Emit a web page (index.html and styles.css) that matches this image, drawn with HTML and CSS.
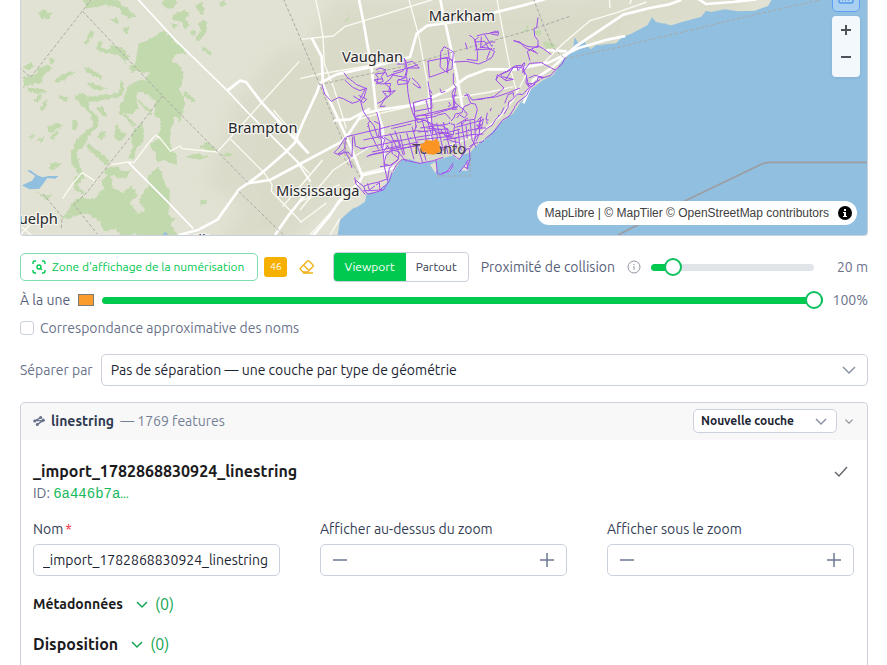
FILE: index.html
```html
<!DOCTYPE html>
<html lang="fr">
<head>
<meta charset="utf-8">
<meta name="viewport" content="width=device-width, initial-scale=1">
<title>Importation de couches</title>
<link rel="stylesheet" href="styles.css">
</head>
<body>
<main class="page">
  <section class="map" aria-label="Carte">
    <svg class="map-canvas" viewBox="60 0 2544 705" preserveAspectRatio="xMidYMid slice" role="img" aria-label="Toronto">
      <defs>
        <filter id="relief" x="-20%" y="-20%" width="140%" height="140%"><feGaussianBlur stdDeviation="22"/></filter>
        <filter id="ragged" x="-5%" y="-5%" width="110%" height="110%">
          <feTurbulence type="fractalNoise" baseFrequency="0.08" numOctaves="3" seed="4"/>
          <feDisplacementMap in="SourceGraphic" scale="14" xChannelSelector="R" yChannelSelector="G"/>
        </filter>
        <filter id="jitter" x="-5%" y="-5%" width="110%" height="110%">
          <feTurbulence type="fractalNoise" baseFrequency="0.12" numOctaves="2" seed="9"/>
          <feDisplacementMap in="SourceGraphic" scale="5" xChannelSelector="R" yChannelSelector="G"/>
        </filter>
      </defs>
      <rect class="land" x="0" y="-100" width="2700" height="900"/>
      <g class="urban" filter="url(#relief)">
        <path d="M700 330l120-170 90-20 90-140h350l500 0 100 60-80 120-420 300-400 60-200 200h-200l90-120-120-70z"/>
        <path d="M1740-10h520l-60 60-180 20-200 60-70 60z"/>
      </g>
      <g class="forest" filter="url(#ragged)">
        <path d="M248 0l12 26 34-8 50-2 40 40 22-6-16-20-42-30z"/>
        <path d="M112 38l18-8 26 10-10 14-22 4z M328 58l22-4 8 18-16-6z M372 78l16 4-6 20-12-10z M252 128l22-34 10-4-12 26-14 18z"/>
        <path d="M288 148l8-26 10 4-4 18 26 4 8-14 34 12 18 26-12 18-18-22-32-10-24 0z"/>
        <path d="M416 132l44-20 26-18 26 12 14 22 26 14 4 18-28 2-12 22 28 18 6 26-10 40 14 30-4 40-28 14-8 32-6 46 20 34 4 30-22-4-20-12-18 10-8-24 14-24-2-38 8-34-20-26 0-42-30-20-28-6-12-22 18-10 24-2 12-22-34-6-18 8-10-18 20-12z"/>
        <path d="M390 252l22 18-4 34 10 18-24 22-22-6-12 10-2-32 12-16 8-26z M352 372l12 26 16 2-16 22-22-8 2-22z"/>
        <path d="M72 232l30-6 16-22 28-10 10 12-26 22-6 22-34 4-18 8z M78 264l40 0 26 10-10 8-50-8z M252 200l24 8 30 20-4 10-44-24z M262 246l36 10 26 12-28 4-30-14z"/>
        <path d="M222 290l26-12 16 12 34-4 60-8 4-40 12 18-10 34-66 12-34 4 4 24 28 20-4 32-28 26-10 30-22 12 4 40 20 46-6 2-34-40-4-30 10-38 30-32 30-24-12-34-24-20z"/>
        <path d="M120 324l16-24 10-2-18 38z M160 242l32-22 40-6-34 22-24 12z M286 330l20-14 8 20 6 12-18-4-2-8z M140 380l34-10 18 8-40 20z M108 420l26-10-12 18z M88 412l14-8-4 18z M148 410l24-18 6 8-22 18z M216 358l16 6-4 30-10-4z"/>
        <path d="M390 404l40-40 2 60-22 22-8 32-18-2 16-38z M448 430l28-14 26 14 14 40-10 14-18-24-30-8z M416 300l40 34-4 8-38-34z M374 340l34 36-6 4-34-32z"/>
        <path d="M290 412l14-22 14 10-10 20z M264 428l64 56-10 14-58-58z M220 540l20-20 8 14-16 24 24 20-4 6-30-16z M70 200l26-14 8 12-22 14z M180 282l24 14-6 10-22-12z M104 300l14-18 8 4-12 22z M150 170l14 12-8 12-8-10z"/>
        <path d="M314 508l34-8 24 14 24-2-22 24-42-10 6 36 28 16 28-18 20 24-26 22 24 34 22-8-18-34 26-38 2-34 16-10 10-16 16 18 4 30 18 20 0 80 16 6-12 22 20 26-16 26-60 10-22-30-40-6-20 14-26-30-36 8-14-32-40-22-38 8-10-34 30-22 44 4 14-20 14-10-4-30 12-10z M220 610l34 4-10 30-60 14z"/>
        <path d="M484 8l26-12 24 10-18 20-22-2z M520 44l30-14 20 10-14 18 18 18-16 10-20-22-22-4z M586 20l16-14 14 18-10 22z M610 56l10 14-4 30-22 24-8-8 18-26-10-16z M570 96l14-10 6 14-14 6z M514 70l20 4-10 14z M658 10l14-10 6 14-14 8z M604 136l16 10 16 12-8 6-20-14z"/>
        <path d="M552 272l36 30-8 4-28-18z M530 322l14 22-4 26-10-20z M554 470l40-10 34 14-36 4z M596 436l30-8 28 22-30 4z M660 462l42-2-20 12z M600 596l22 8-18 14z M150 490l36 0-10 14-26 4z M100 568l30 20 30-6-20 18z"/>
        <path d="M1032 60l20-16-10 14-6 14z M1569 95l16-20 0 14-10 8z M1600 70l4 24 14-4 4 20-22-12z M1630 124l30 6 12 10-34 6z"/>
      </g>
      <path class="water" d="M66 556l30-14 10-14-24-16 8-2 22 16 16 6 18-4 30 0-10 8-24-2-10 14-14 18-30 2z M486 704l10-8 10 8z"/>
      <path class="water" transform="translate(900 0)" filter="url(#jitter)" d="M108 720l5-15 7-45 22-20 18-15 12-4 23-16 5-25 40-5 22-30 28-45 15-20 25-2 30 12 50-8 40-14 35-3 25-7 20-23 30-20 40-45 40-30 20-30 30-40 40-30 30-15 35-55 25-30 4-28 11 18 15-10 10 14 12 14 16-12 14-2 46-4 20-20 24-8 30-16 20-10 14-24 12 14 46 10 40-12 50-14 14-18 16 4 40-8 40 6 50-2 40-14 12-20 340-10v740z"/>
      <path class="island" transform="translate(900 0)" d="M390 494l16-8 6 20-6 14z M424 520l20-8 12-16-8 20z M456 464l28-8 6 6-16 18z M484 512l18-28 4 0-4 28z"/>
      <g class="minor-road">
        <path d="M332 494l54-8 16 2 46-62 18-20 12 6 34 42 8-6 20-10 6 8 106 10 140-156 106-116"/>
        <path d="M692 418l100 100 24 36-2 20 90 92 M752 346l116 114 60 60 M188 596l28-42 30-36 44 28 M820 330l60 70 46 60 M848 620l120-140 M64 680l30 26 M60 705l26-26 18-20"/>
        <path d="M900 118l100-10 34-28 260-80 M945-8l14 60 10 60 4 80 28 70 38 124 M1225-8l30 110 30 160 8 180 M1490-8l20 110 20 100 22 80 M900 236l60-14 200-34"/>
        <path d="M900 630l100-120 110-70 M900 604l120-50 M930 705l120-130 M990 705l30-50 M900 560l60-70 M900 668l80-60"/>
        <path d="M1084 520l100-24 M1300 450l74-22 66-28 60-50 40-50 40-80 M1070 360l70-20 150-34 180-30 70-16 M1630 190l60-60 80-68 80-24 90-32 M1890 12l6-22 M1830 24l-2-30"/>
      </g>
      <g class="highway">
        <path class="thin" d="M412-4l116 126 154 150 60 64 150 150 40 60 M386 488l110 110 84 88"/>
        <path d="M682 272l38-30 18 4 44 58 100 110 44 46"/>
        <path d="M536 705l60-16 56-30 66-92 30-20 40-30 66-58 30-30 24-60 42-90 10-30 50-26 120-26 100-26 20-70 32-24 100-14 200-50 240-72"/>
        <path d="M740 550l70-10 90-48 120-64 26-26 40-60 50-12 110-16 100-44 56-40 60-22 84 0 100-20 90-44 90-26 50-10"/>
        <path d="M935 114l30 56 4 84 30 70 46 100 22 54 20 50-10 20-60 56-30 46-50 60"/>
        <path d="M1076-6l16 80 24 140 12 110 20 60 6 100 M1320-6l8 40 40 180 20 110 M1000 362l50-4 60-32 M825 705l40-58 40-50 30-36"/>
        <path d="M1084 526l100-22 M1570 310l30-70 60-40 66-60 90-60 54-36 80-20 54-10 40-14 M1640 150l60 4"/>
        <path d="M2090-6l28 18 80-6 70-8"/>
      </g>
      <g class="boundary">
        <path d="M276-4L92 232l-30-26 M248 34l240 254 256 260 M488 288L326 494l-66 84-38 36 70 88 M716 574l136 132 M130 582l56 68-2 34 M850-4l50 116 58 140 90 220 32 60"/>
        <path d="M958 254l240-52 400-114 114-40 M1600-4l34 88 26 60 34 32 170-36 400-96 240-54 M1040 410l-6 66 12 20 20 0 M1310 528h100l2-66"/>
      </g>
      <path class="state-line" d="M1854 705l202-103 234-112 15-3h310"/>
      <g class="network" filter="url(#jitter)">
        <g transform="translate(900 0)">
          <path d="M66 254l8 28 20 22 22-12 14 4 26 14 20-6 14-26 6-14-26-10-12-10-16-12-10-14 M134 240l24 22 22 10 20-8-8 28-10 12 8 30 10 16 8 10 14 18 10 32 12 8 0 26 M160 288l30 20 10-10-24-12 M228 210l12-6 18 6-14 20 6 14-20 8 4-20-8-10 32-4 4 12 18-8-10 16-16 12 18 16-2 20-18 14-12 20 16-2 M248 236l-26 4 20 12 30-2-6 26 20-4-24 20-14-18 22 0 M262 286l-16 18-14 6 M290 192l32 0-14 22-34 10 40 8 8-28 36 0-20-20-18 4-8-14 10 34-4 24-26 10 2 12 30-4 6-16"/>
          <path d="M280 216l44-12 30-10 M320 232l4 46 6 34 8 26 8 18 2 28 M324 244l-30-6 M336 234l18 16 8 14-8-2-16-12 M382 184l40-8 20-4 2 40-56 20-4-50 M422 170l-2 30 18 16 18-10 4-50-12-8-16-8-10 16 0 20 24-2 12 8 M444 150l4 30-8 30 4 10 M462 186l38-2 36 8 20-8 20-12 8-18-20-10-22-2 2-32 M500 178l32 4 0-26-6-34-8-10-10-6 M524 126l30-2 16 28-10 26 M536 112l-12 8 6 30 40-24 16 0 M554 104l22 36 M524 150l60-4 M496 128l6 20 M530 108l22-6 20-2 12-6 12 0 M570 98l26 0-2 8-20-4 M714 52l-4 30-8 4 2 22 10 14 0 20-30-2-22-10-20-8 M640 122l20 4 14 16 34 16 M714 138l16 8 24 18 M716 136l-34 18 8 28 M696 148l18 14"/>
          <path d="M460 220l0 30 8 12-6 32-2 20 10 14-14 0 10-20-10-20 14-2 M464 264l-8 16 6 26 28 22 12 14-8 12-16-10-8 10 M500 280l12 30 14 2 6 16-8 30-30 4-10 14 M492 288l14-4 10 16 26-2 40-8 30-26-24-24 4-16 26 18 22-4-34-8-4-6 30-14 12-12 20-2 10-8-6 30 20-28 36-2 26 14 16 8 M616 240l24-38 24 0 16 24-2 22 10 14 18-10 M650 196l4 16 14-16 6 28 M642 200l-20 12-26 14-8 14 M680 232l6 26 26-16 2-10 16 0-26-6-18 8 M680 252l16-2 M690 260l-22 24-16-2-14 16-12 8-2 16-12 20 M614 310l10-26 16-6 0 12 M530 298l60-8 36-12 34-14 M612 322l-8 18-18 20-10 16-14 8-16 16-20 10-6 22-12 8"/>
          <path d="M340 308l54-14 2 30-52 10zM340 308l6 50M378 300l10 40 M384 244l8 50 2 50 4 60 M346 350l126-30 M350 346l40 0 84-26 M140 410l200-48 70-14 M274 386l60-14 M136 412l-20 32-14 14 18 8 14-14 14 26 8 26 M136 414l-2 32-20 16 30-6 12 14 2-60 M162 408l4 30 18 8 12 0 M210 362l-6 8 6 26 14 30 12 22 M222 364l18 8-4 36 18 10-6 26 6 60 8 34 M230 336l8 30 4 44 M200 470l20-8 30-6 14-20 M190 420l50-10 60-12 50-6 36 4 M180 446l60-12 120-24 80-12 40-10 M216 456l80-18 60-12 M270 400l28 60 22 26 M284 392l16 40 10 34 M300 404l14 60 M320 398l22 80 M336 380l20 70 12 38 M252 412l20 12 22-4 6 22-30 6-10-12"/>
          <path d="M340 340l14 28 20-8 14 10 20 26 22 4 20 22 26 6 M346 354l30 8 26 12 26 4 20 14 M366 358l10 40 6 50 M378 346l14 50 10 36 M396 372l16 36-4 46 M410 368l10 40 10 44 M430 366l6 26 10 40 10 26 M360 384l84-12 M354 396l90-10 M350 420l110-12 M420 396l40 8 4-30-18-4 16-16 4-12 20-4 6-18 18-8 M350 376l-8 20 M410 346l26-6 16 18 M380 384l42 4 14 20 22-4 M430 420l34-6 6 30-18 12 M440 388l12 28 20-2"/>
          <path d="M466 382l76-20 M474 386l4 40 6 26 M484 366l8 50 4 36 M498 376l4 40 M510 362l6 56 12 24 M524 360l2 56 M540 362l-2 40-10 22 M466 402l72-18 20 0 M464 414l50-10 36-2 M470 374l34-20 M540 366l10-10-6 30-14-10 14-2-18 20 M532 362l12-12-10 38 M562 338l-4 22 8 0 M574 324l-4 10"/>
          <path d="M796 172l-10 20-22 20-12 14-24 8-22 14-18 20-8 18-28 22-10 18-14 22-20 12-14 18-14 20-20 14-14 14-24 4-12 16-16 2-10 18 M430 472l-30 10-40 8-30-6-14-6-12 2-14 14-14 24-8 24-18 28-28 8-16 4-10-6-4-16-26-20"/>
          <path d="M190 560l12-6 34-8 28-10 M190 572l20 0 30-2 14-14 M202 550l6 20 30-22 2 24 M164 532l4 20 22 24 6 8 M262 544l6-40 26-26 M240 500l30-4 24-16 4-24-20-6-20 16-6 26 16 4 M408 480l4 40 10 4 20-10 18-26 M424 520l24-6 12-18 M504 480l-8 14-18 22 M500 486l4 20-12-6 M458 464l20 14 22-30 M508 448l2 30-10 30"/>
          <path d="M386 452l70-16 M420 438l6 26 M438 434l6 28 M370 452l8 30 M300 446l60-10 M206 466l80-16 90-20 M276 430l0 30 20 14 M420 266l4 12 12-4 M390 270l6 10 M446 306l6 10-8 4 M560 364l2 8"/>
        </g>
      </g>
      <g class="labels">
        <text class="under" x="1237" y="461">Toronto</text>
        <text x="1286" y="64">Markham</text>
        <text x="1026" y="186">Vaughan</text>
        <text x="684" y="398">Brampton</text>
        <text x="828" y="588">Mississauga</text>
        <text x="24" y="671">Guelph</text>
        <text x="555" y="736">Milton</text>
      </g>
      <path class="highlight" d="M1260 432l12-2 4-10 24 2 8-6 6 6 4 4 2 30-10 2-6 6-22-2-6-8-10 2z"/>
    </svg>
    <button class="map-mode" type="button" aria-label="Calques"><svg viewBox="0 0 16 16"><rect x="1" y="1" width="14" height="12" rx="1"/><path d="M4 10h1M7 10h1M10 10h1"/></svg></button>
    <div class="map-zoom">
      <button type="button" aria-label="Zoom avant"><svg viewBox="0 0 12 12"><path d="M6 1v10M1 6h10"/></svg></button>
      <button type="button" aria-label="Zoom arrière"><svg viewBox="0 0 12 12"><path d="M1 6h10"/></svg></button>
    </div>
    <div class="attribution">
      <span><a href="#">MapLibre</a> | <a href="#">© MapTiler</a> <a href="#">© OpenStreetMap contributors</a></span>
      <svg viewBox="0 0 16 16" aria-hidden="true"><circle cx="8" cy="8" r="7"/><path d="M7 4h2v2H7zM6 7h3v4h1v1H6v-1h1V8H6z"/></svg>
    </div>
  </section>

  <section class="settings">
    <div class="row">
      <button class="scan" type="button">
        <svg viewBox="0 0 16 16" stroke-width="1.4" aria-hidden="true"><path d="M2 5V4a2 2 0 0 1 2-2h1M11 2h1a2 2 0 0 1 2 2v1M14 11v1a2 2 0 0 1-2 2h-1M5 14H4a2 2 0 0 1-2-2v-1"/><circle cx="8" cy="8" r="2"/><path d="M9 9l2 2"/></svg>
        Zone d'affichage de la numérisation
      </button>
      <span class="count">46</span>
      <button class="erase" type="button" aria-label="Effacer"><svg viewBox="0 0 16 16" stroke-width="1.4"><path d="M4 13L1.5 10.500a1 1 0 0 1 0-1.500L8.500 2a1 1 0 0 1 1.500 0L14 6a1 1 0 0 1 0 1.500L8.500 13zM4.500 6l5.500 5.500M4 14h10"/></svg></button>
      <div class="segmented">
        <button class="active" type="button">Viewport</button>
        <button type="button">Partout</button>
      </div>
      <label class="strong" for="proximity">Proximité de collision</label>
      <svg class="info" viewBox="0 0 14 14" aria-hidden="true"><circle cx="7" cy="7" r="6"/><path d="M7 6v4M7 4v1"/></svg>
      <input class="slider near" id="proximity" type="range" min="0" max="220" value="20">
      <output class="distance" for="proximity">20 m</output>
    </div>
    <div class="row opacity-row">
      <label class="strong" for="opacity">À la une</label>
      <span class="swatch"></span>
      <input class="slider full" id="opacity" type="range" min="0" max="100" value="100">
      <output for="opacity">100%</output>
    </div>
    <div class="row check-row">
      <input id="fuzzy" type="checkbox">
      <label for="fuzzy">Correspondance approximative des noms</label>
    </div>
    <div class="row split-row">
      <label for="split">Séparer par</label>
      <div class="select">
        <select id="split"><option>Pas de séparation — une couche par type de géométrie</option></select>
        <svg viewBox="0 0 14 14" stroke-width="1.5" aria-hidden="true"><path d="M1 4l6 6 6-6"/></svg>
      </div>
    </div>
  </section>

  <section class="panel">
    <header class="panel-head">
      <svg class="line-icon" viewBox="0 0 14 14" stroke-width="1.6" aria-hidden="true"><path d="M9 3L2.500 6.500h9.500L5 11"/><circle cx="9" cy="3" r="1"/><circle cx="2" cy="7" r="1"/><circle cx="12" cy="6" r="1"/><circle cx="5" cy="11" r="1"/></svg>
      <strong>linestring</strong>
      <span class="features">— 1769 features</span>
      <div class="select small">
        <select aria-label="Couche cible"><option>Nouvelle couche</option></select>
        <svg viewBox="0 0 14 14" stroke-width="1.5" aria-hidden="true"><path d="M2 5l5 5 5-5"/></svg>
      </div>
      <button class="collapse" type="button" aria-label="Replier"><svg viewBox="0 0 14 14" stroke-width="1.6"><path d="M2 5l5 5 5-5"/></svg></button>
    </header>
    <div class="panel-body">
      <div class="title-row">
        <h2>_import_1782868830924_linestring</h2>
        <button class="confirm" type="button" aria-label="Valider"><svg viewBox="0 0 14 14" stroke-width="1.4"><path d="M1 8l4 4 8-9"/></svg></button>
      </div>
      <p class="layer-id">ID: <a href="#">6a446b7a…</a></p>
      <div class="fields">
        <div class="field">
          <label for="name">Nom<span class="required">*</span></label>
          <input class="box" id="name" type="text" value="_import_1782868830924_linestring">
        </div>
        <div class="field">
          <label for="minzoom">Afficher au-dessus du zoom</label>
          <div class="box stepper">
            <button type="button" aria-label="Diminuer"><svg viewBox="0 0 14 14" stroke-width="1.5"><path d="M0 7h14"/></svg></button>
            <input id="minzoom" type="text" inputmode="numeric">
            <button type="button" aria-label="Augmenter"><svg viewBox="0 0 14 14" stroke-width="1.5"><path d="M0 7h14M7 0v14"/></svg></button>
          </div>
        </div>
        <div class="field">
          <label for="maxzoom">Afficher sous le zoom</label>
          <div class="box stepper">
            <button type="button" aria-label="Diminuer"><svg viewBox="0 0 14 14" stroke-width="1.5"><path d="M0 7h14"/></svg></button>
            <input id="maxzoom" type="text" inputmode="numeric">
            <button type="button" aria-label="Augmenter"><svg viewBox="0 0 14 14" stroke-width="1.5"><path d="M0 7h14M7 0v14"/></svg></button>
          </div>
        </div>
      </div>
      <div class="group">
        <h4>Métadonnées</h4>
        <button type="button"><svg viewBox="0 0 14 14" stroke-width="1.5" aria-hidden="true"><path d="M2 5l5 5 5-5"/></svg>(0)</button>
      </div>
      <div class="group">
        <h3>Disposition</h3>
        <button type="button"><svg viewBox="0 0 14 14" stroke-width="1.5" aria-hidden="true"><path d="M2 5l5 5 5-5"/></svg>(0)</button>
      </div>
    </div>
  </section>
</main>
</body>
</html>
```
FILE: styles.css
```css
:root {
  --green: #00c950;
  --line: #cad0dc;
  --muted: #6a7389;
  --text: #1c2433;
}

* { box-sizing: border-box; }

body {
  margin: 0;
  background: #fff;
  color: var(--text);
  font: 14px/20px Ubuntu, "Noto Sans", sans-serif;
}

button, input, select { font: inherit; color: inherit; }

button {
  display: flex;
  align-items: center;
  justify-content: center;
  padding: 0;
  border: 0;
  background: none;
}

svg { flex: none; fill: none; stroke: currentColor; }
h2, h3, h4, p { margin: 0; }

.page {
  display: flex;
  flex-direction: column;
  min-height: 100vh;
  padding: 0 19px 0 20px;
}

/* Map */
.map {
  position: relative;
  flex: none;
  height: 236px;
  overflow: hidden;
  border: 1px solid var(--line);
  border-top: 0;
  border-radius: 0 0 4px 4px;
}

.map-canvas { display: block; width: 100%; height: 100%; }
.map-canvas path { stroke-linejoin: round; }
.land { fill: #e1e2d3; stroke: none; }
.urban { fill: #d4d4c1; stroke: none; opacity: 0.5; }
.forest { fill: #c1d9ad; stroke: none; }
.water { fill: #91bfe0; stroke: none; }
.island { fill: #e1e2d3; stroke: none; }
.minor-road { stroke: #fbfbf4; stroke-width: 4; }
.highway { stroke: #fff; stroke-width: 8; }
.highway .thin { stroke-width: 5; }
.boundary { stroke: #aaa9a6; stroke-width: 3; stroke-dasharray: 10 6; }
.state-line { stroke: #9c9da1; stroke-width: 5; }
.network { stroke: #9f50ea; stroke-width: 3; }
.highlight { fill: #fb9423; stroke: none; }

.labels {
  fill: #27272c;
  stroke: #f4f4ee;
  stroke-width: 8;
  stroke-linejoin: round;
  paint-order: stroke;
  font: 44px "Noto Sans", sans-serif;
}

.labels .under { stroke: none; fill: #464250; }

.map-mode {
  position: absolute;
  top: -16px;
  right: 7px;
  width: 28px;
  height: 28px;
  border: 1px solid #60a0f0;
  border-radius: 5px;
  background: #a9cff1;
  color: #2a80ea;
}

.map-mode svg { width: 16px; }

.map-zoom {
  position: absolute;
  top: 16px;
  right: 7px;
  width: 28px;
  height: 61px;
  border-radius: 4px;
  background: #f3f8fc;
  color: #4e535b;
  box-shadow: 0 1px 3px #4b77992e;
}

.map-zoom button { width: 28px; height: 27px; }
.map-zoom svg { width: 12px; stroke-width: 2; }

.attribution {
  position: absolute;
  right: 10px;
  bottom: 10px;
  display: flex;
  align-items: center;
  gap: 8px;
  height: 24px;
  padding: 0 4px 0 8px;
  border-radius: 12px;
  background: #fff;
  color: #404040;
  font: 12px/20px "Liberation Sans", sans-serif;
}

.attribution a { color: inherit; text-decoration: none; }
.attribution svg { width: 16px; stroke: none; }
.attribution circle { fill: #000; }
.attribution path { fill: #fff; }

/* Import settings */
.settings { padding-top: 16px; color: var(--muted); }
.row { display: flex; align-items: center; }
.row .strong { color: #57617a; }

.scan {
  gap: 5px;
  height: 28px;
  padding: 0 13px 0 10px;
  border: 1px solid #7fdcb0;
  border-radius: 5px;
  color: var(--green);
  font-size: 12px;
}

.scan svg { width: 16px; }

.count {
  width: 23px;
  margin-left: 6px;
  border-radius: 3px;
  background: #f5b000;
  color: #fff;
  font-size: 10px;
  text-align: center;
}

.erase { margin-left: 12px; color: #efb117; }
.erase svg { width: 16px; }

.segmented {
  display: flex;
  height: 30px;
  margin: 0 12px 0 18px;
  overflow: hidden;
  border: 1px solid var(--line);
  border-radius: 4px;
  color: #303a4e;
  font-size: 12px;
}

.segmented button { padding: 0 11px 0 10px; }
.segmented .active { background: var(--green); color: #fff; }
.info { width: 14px; margin: 0 10px 0 12px; color: #8f96a3; }

.slider {
  flex: 1;
  min-width: 0;
  height: 18px;
  margin: 0;
  appearance: none;
  background: none;
}

.slider::-webkit-slider-runnable-track { height: 7px; border-radius: 4px; }
.near::-webkit-slider-runnable-track { background: linear-gradient(to right, var(--green) 12%, #e1e5ea 12%); }
.full::-webkit-slider-runnable-track { background: var(--green); }

.slider::-webkit-slider-thumb {
  width: 18px;
  height: 18px;
  margin-top: -6px;
  appearance: none;
  border: 2px solid #10c060;
  border-radius: 50%;
  background: #fff;
}

.distance { width: 54px; text-align: right; }
.opacity-row { gap: 8px; padding-top: 8px; }
.opacity-row output { margin-left: 2px; }
.swatch { width: 16px; height: 12px; border: 1px solid #7c7c7c; background: #f99c2c; }
.check-row { gap: 6px; padding-top: 8px; }

.check-row input {
  width: 14px;
  height: 14px;
  margin: 0;
  appearance: none;
  border: 1px solid var(--line);
  border-radius: 3px;
}

.split-row { gap: 8px; padding-top: 16px; }
.select { position: relative; flex: 1; }

.select select {
  display: block;
  width: 100%;
  height: 32px;
  padding: 0 36px 0 9px;
  appearance: none;
  border: 1px solid var(--line);
  border-radius: 5px;
  background: #fff;
  color: var(--text);
}

.select svg {
  position: absolute;
  top: 50%;
  right: 12px;
  width: 14px;
  height: 14px;
  margin-top: -7px;
  color: #8a93a5;
}

/* Layer panel */
.panel {
  flex: 1;
  margin-top: 16px;
  border: 1px solid var(--line);
  border-bottom: 0;
  border-radius: 5px 5px 0 0;
}

.panel-head {
  display: flex;
  align-items: center;
  height: 37px;
  padding: 0 13px 2px 12px;
  border-radius: 5px 5px 0 0;
  background: #f8f8f9;
}

.line-icon { width: 12px; margin-right: 6px; color: #66708a; }
.panel-head strong { color: #303a50; font-weight: 600; }
.features { margin: 0 auto 0 6px; color: #748096; }
.select.small { flex: 0 0 144px; }
.small select { height: 24px; padding: 0 28px 0 7px; font-size: 12px; font-weight: 700; }
.small svg { right: 9px; }
.collapse { margin-left: 7px; color: #8a8f98; }
.collapse svg { width: 10px; }
.panel-body { padding: 19px 13px 0 12px; }
.title-row { display: flex; align-items: center; justify-content: space-between; height: 24px; }
h2, h3 { font-size: 16px; font-weight: 600; line-height: 24px; color: #1b1b20; }
h4 { font-size: 14px; font-weight: 600; color: #1b1b20; }
.confirm { margin-right: 6px; color: #60656c; }
.confirm svg { width: 14px; }
.layer-id { height: 20px; color: #606b80; }
.layer-id a { color: #17b85c; font: 14px/20px "Liberation Mono", monospace; text-decoration: none; }

.fields {
  display: grid;
  grid-template-columns: repeat(3, 1fr);
  gap: 40px;
  padding: 16px 0 18px;
  color: #343e55;
}

.field { display: flex; flex-direction: column; gap: 5px; min-width: 0; }
.required { margin-left: 2px; color: #ef3340; }

.box {
  width: 100%;
  height: 32px;
  padding: 0 9px;
  border: 1px solid var(--line);
  border-radius: 5px;
  background: #fff;
  color: var(--text);
  line-height: 28px;
}

.stepper { display: flex; align-items: center; padding: 0 12px; color: #6b7890; }
.stepper input { flex: 1; min-width: 0; border: 0; outline: 0; background: none; }
.stepper svg { width: 14px; }
.group { display: flex; align-items: center; gap: 12px; height: 20px; margin-bottom: 20px; }
.group button { gap: 6px; color: #16a653; font-size: 16px; }
.group svg { width: 14px; }
```
